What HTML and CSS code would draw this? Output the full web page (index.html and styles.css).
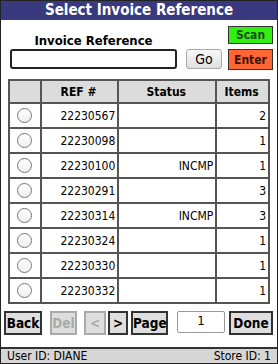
FILE: index.html
```html
<!DOCTYPE html>
<html lang="en">
<head>
    <meta charset="UTF-8">
    <meta name="viewport" content="width=device-width, initial-scale=1.0">
    <title>Select Invoice Reference</title>
    <link rel="stylesheet" href="styles.css">
</head>
<body>
    <div class="screen">
        <div class="title">Select Invoice Reference</div>

        <div class="entry">
            <div class="entry-main">
                <div class="entry-label">Invoice Reference</div>
                <div class="entry-row">
                    <input class="ref-input" type="text" value="">
                    <button class="go-btn">Go</button>
                </div>
            </div>
            <div class="entry-side">
                <button class="scan-btn">Scan</button>
                <button class="enter-btn">Enter</button>
            </div>
        </div>

        <table class="list">
            <tr>
                <th class="c-sel"></th>
                <th class="c-ref">REF #</th>
                <th class="c-status">Status</th>
                <th class="c-items">Items</th>
            </tr>
            <tr><td class="c-sel"><input type="radio" name="inv"></td><td>22230567</td><td></td><td>2</td></tr>
            <tr><td class="c-sel"><input type="radio" name="inv"></td><td>22230098</td><td></td><td>1</td></tr>
            <tr><td class="c-sel"><input type="radio" name="inv"></td><td>22230100</td><td>INCMP</td><td>1</td></tr>
            <tr><td class="c-sel"><input type="radio" name="inv"></td><td>22230291</td><td></td><td>3</td></tr>
            <tr><td class="c-sel"><input type="radio" name="inv"></td><td>22230314</td><td>INCMP</td><td>3</td></tr>
            <tr><td class="c-sel"><input type="radio" name="inv"></td><td>22230324</td><td></td><td>1</td></tr>
            <tr><td class="c-sel"><input type="radio" name="inv"></td><td>22230330</td><td></td><td>1</td></tr>
            <tr><td class="c-sel"><input type="radio" name="inv"></td><td>22230332</td><td></td><td>1</td></tr>
        </table>

        <div class="nav">
            <button class="nav-btn b-back">Back</button>
            <button class="nav-btn b-del" disabled>Del</button>
            <button class="nav-btn b-prev" disabled>&lt;</button>
            <button class="nav-btn b-next">&gt;</button>
            <button class="nav-btn b-page">Page</button>
            <input class="page-input" type="text" value="1">
            <button class="nav-btn b-done">Done</button>
        </div>

        <div class="status">
            <span>User ID: DIANE</span>
            <span>Store ID: 1</span>
        </div>
    </div>
</body>
</html>
```

FILE: styles.css
```css
*{margin: 0;padding: 0;box-sizing: border-box;}
body{font-family: "DejaVu Sans Condensed", "DejaVu Sans", sans-serif;color: #000;background: #fff;}
button, input{font-family: inherit;}

.screen{width: 278px;height: 364px;border: 1px solid #222;display: flex;flex-direction: column;}

.title{height: 19px;line-height: 19px;background: #39397f;color: #fff;font-weight: bold;font-size: 15px;text-align: center;}

.entry{display: flex;padding: 6px 0 0 9px;}
.entry-main{width: 212px;}
.entry-label{height: 23px;padding-top: 8px;font-size: 13px;font-weight: bold;text-align: center;width: 167px;line-height: 14px;}
.entry-row{display: flex;}
.ref-input{width: 167px;height: 20px;border: 2px solid #222;border-radius: 3px;background: #fff;}
.go-btn{width: 36px;height: 20px;margin-left: 9px;border: 1px solid #aaa;border-radius: 3px;background: linear-gradient(#f8f8f8, #e0e0e0);font-size: 14px;}

.entry-side{display: flex;flex-direction: column;gap: 5px;margin-left: 6px;}
.scan-btn{width: 45px;height: 18px;background: #33ee11;border: 1px solid #333;color: #1d4a1d;font-weight: bold;font-size: 12px;}
.enter-btn{width: 45px;height: 21px;background: #ff6633;border: 1px solid #333;color: #3a1205;font-weight: bold;font-size: 12px;}

.list{margin: 9px 0 0 7px;width: 262px;border-collapse: collapse;border: 2px solid #555;font-size: 12px;}
.list th, .list td{border: 2px solid #555;text-align: right;padding: 0 2px 0 0;height: 25px;}
.list th{background: #dcdcdc;height: 23px;text-align: center;font-size: 12px;}
.list .c-sel{width: 32px;text-align: center;padding: 0;}
.list .c-ref{width: 78px;}
.list .c-status{width: 99px;}
.list .c-items{width: 53px;}
.list input[type=radio]{appearance: none;width: 15px;height: 15px;border: 1px solid #777;border-radius: 50%;background: linear-gradient(#fff, #eee);display: block;margin: 0 auto;}

.nav{display: flex;align-items: flex-start;margin: 7px 0 0 3px;}
.nav-btn{height: 24px;background: #dedede;border: 2px solid #333;font-weight: bold;font-size: 13.5px;padding: 0;}
.nav-btn:disabled{border-color: #aaa;color: #aaa;}
.b-back{width: 38px;}
.b-del{width: 27px;margin-left: 8px;}
.b-prev{width: 22px;margin-left: 7px;}
.b-next{width: 20px;margin-left: 2px;}
.b-page{width: 37px;margin-left: 3px;}
.page-input{width: 48px;height: 22px;margin-left: 9px;border: 1px solid #999;border-radius: 2px;text-align: center;font-size: 13px;padding-bottom: 4px;}
.b-done{width: 44px;margin-left: 4px;}

.status{margin-top: auto;height: 16px;border-top: 2px solid #333;background: #d6d6d6;display: flex;justify-content: space-between;padding: 0 6px 0 6px;font-size: 12px;line-height: 14px;}
```
